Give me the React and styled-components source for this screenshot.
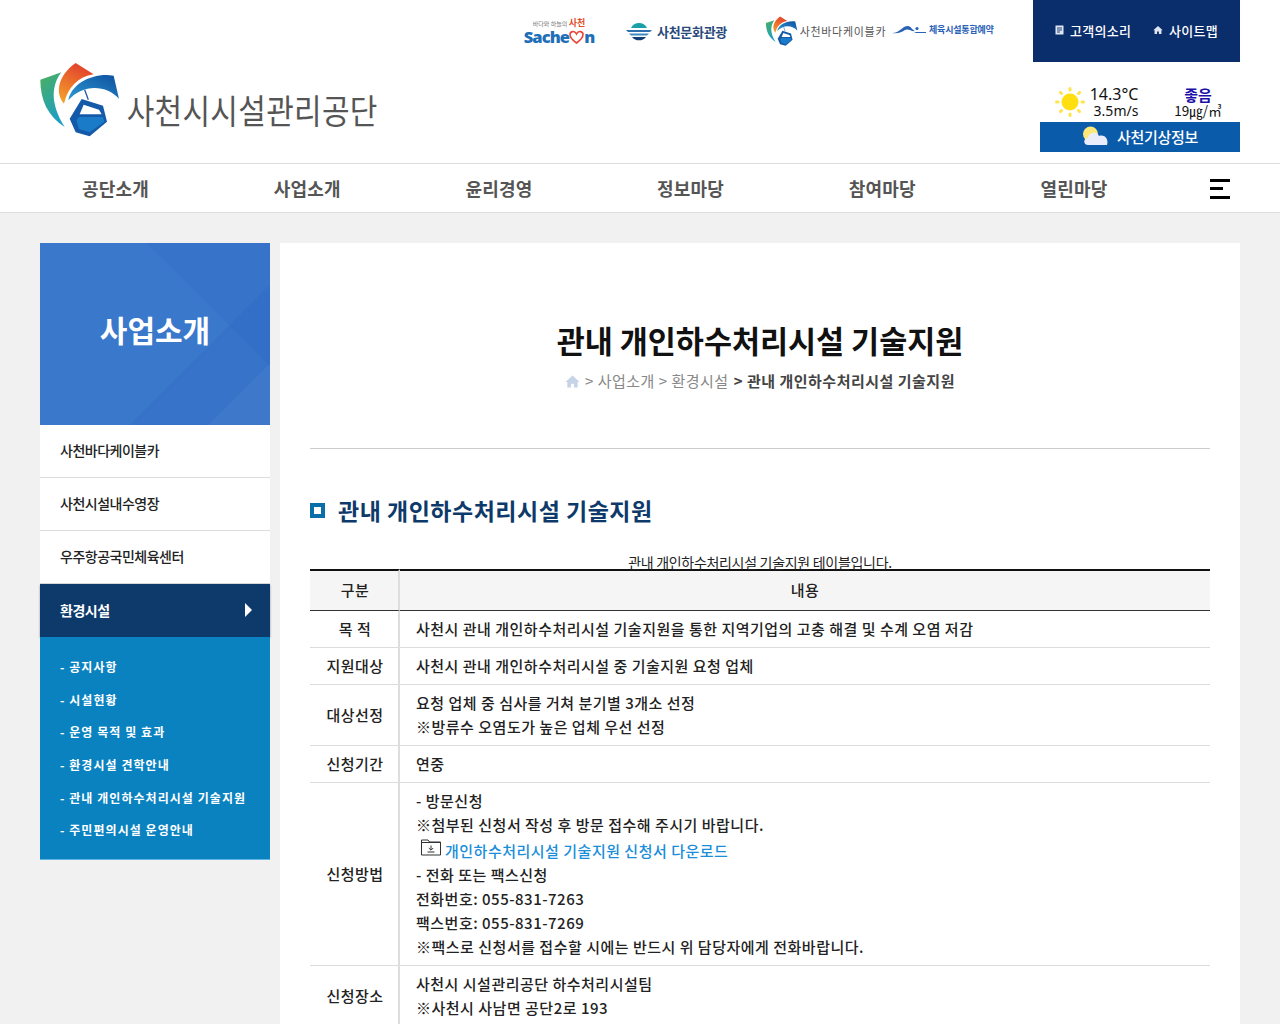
import React from "react";
import styled, { createGlobalStyle } from "styled-components";

const GlobalStyle = createGlobalStyle`
  html, body {
    margin: 0;
    height: 100%;
    overflow: hidden;
    background: #f1f1f1;
    font-family: "Noto Sans CJK KR", "Noto Sans", sans-serif;
    color: #222;
  }
  * { box-sizing: border-box; }
  a { color: inherit; text-decoration: none; }
  ul { list-style: none; margin: 0; padding: 0; }
`;

const MainLogo = ({ size = 75 }) => (
  <svg width={(size * 245) / 225} height={size} viewBox="55 35 245 225">
    <defs>
      <linearGradient id="lgGreen" x1="0" y1="0" x2="0.4" y2="1">
        <stop offset="0" stopColor="#4cb05c" />
        <stop offset="1" stopColor="#1c9fc4" />
      </linearGradient>
      <linearGradient id="lgRed" x1="0.6" y1="0" x2="0.2" y2="1">
        <stop offset="0" stopColor="#e2402c" />
        <stop offset="1" stopColor="#f4a12c" />
      </linearGradient>
      <linearGradient id="lgBlue" x1="0" y1="1" x2="1" y2="0">
        <stop offset="0" stopColor="#2a9ad4" />
        <stop offset="1" stopColor="#0f4f9e" />
      </linearGradient>
    </defs>
    <path d="M62 88 L125 66 C98 102 88 155 135 230 C85 198 62 150 62 88Z" fill="url(#lgGreen)" />
    <path d="M168 38 L222 72 C175 80 145 110 133 160 C105 128 115 75 168 38Z" fill="url(#lgRed)" />
    <path d="M146 150 C155 100 220 66 282 76 L298 145 C262 104 190 98 146 150Z" fill="url(#lgBlue)" />
    <path d="M195 118 L206 148" stroke="#1d5ea8" strokeWidth="4" fill="none" />
    <path d="M186 146 L250 166 L262 214 L210 258 L168 246 L150 205Z" fill="#155aa8" />
    <path d="M192 163 L238 178 L246 192 L180 192Z" fill="#fff" />
    <path d="M178 200 L250 200 L254 214 L210 246 L178 236 L170 210Z" fill="#1a7cc8" />
  </svg>
);

const Sun = () => (
  <svg width="32" height="32" viewBox="0 0 32 32">
    <circle cx="16" cy="16" r="8.5" fill="#ffdf10" />
    {[0, 45, 90, 135, 180, 225, 270, 315].map((a) => (
      <rect key={a} x="14.5" y="1" width="3" height="4.5" rx="1.5" fill="#ffe34a" transform={`rotate(${a} 16 16)`} />
    ))}
  </svg>
);

const CloudSun = () => (
  <svg width="27" height="20" viewBox="0 0 27 20">
    <circle cx="8.5" cy="8" r="7.5" fill="#ffe87a" />
    <path d="M6 19 C1 19 1 12 6 12 C7 6 15 5 17 10 C23 8 27 14 25 19Z" fill="#e9edfb" />
  </svg>
);

const Hamburger = () => (
  <MenuButton width="20" height="20" viewBox="0 0 20 20">
    <rect x="0" y="0" width="20" height="3" fill="#000" />
    <rect x="0" y="8" width="13" height="3" fill="#000" />
    <rect x="0" y="17" width="20" height="3" fill="#000" />
  </MenuButton>
);

const FolderIcon = () => (
  <svg width="20" height="17" viewBox="0 0 20 17" fill="none" stroke="#333" strokeWidth="1">
    <path d="M0.5 16 V1 H7 L8.5 3 H19.5 V16Z" fill="#fff" />
    <path d="M0.5 3.5 H19.5" />
    <path d="M10 6.5 V11 M7.8 9 L10 11.2 L12.2 9 M6.5 13 H13.5" />
  </svg>
);

const HomeIcon = ({ color, size = 15 }) => (
  <svg width={size} height={size} viewBox="0 0 16 16">
    <path d="M8 1.5 L15.5 8.5 H13.5 V14.5 H9.5 V10.5 H6.5 V14.5 H2.5 V8.5 H0.5Z" fill={color} />
  </svg>
);

const NoteIcon = () => (
  <svg width="9" height="10" viewBox="0 0 9 10">
    <rect x="0.5" y="0.5" width="8" height="9" fill="#dfe6f2" />
    <path d="M2 3 H7 M2 5 H7 M2 7 H5" stroke="#0a2d6b" strokeWidth="0.9" />
  </svg>
);

export default function App() {
  const menus = ["공단소개", "사업소개", "윤리경영", "정보마당", "참여마당", "열린마당"];
  const side = ["사천바다케이블카", "사천시설내수영장", "우주항공국민체육센터"];
  const subs = ["공지사항", "시설현황", "운영 목적 및 효과", "환경시설 견학안내", "관내 개인하수처리시설 기술지원", "주민편의시설 운영안내"];

  return (
    <>
      <GlobalStyle />
      <Header>
        <TopRow>
          <SachenLogo>
            <SachenSmall>
              바다와 하늘의 <b>사천</b>
            </SachenSmall>
            <SachenWord>
              Sache
              <svg width="15" height="14" viewBox="0 0 15 14">
                <path d="M7.5 13 C2 9 1 6.5 1 4.5 C1 1.5 5.5 0 7.5 4 C9.5 0 14 1.5 14 4.5 C14 6.5 13 9 7.5 13Z" fill="none" stroke="#e8463a" strokeWidth="1.6" />
              </svg>
              n
            </SachenWord>
          </SachenLogo>
          <CultureLogo>
            <svg width="26" height="22" viewBox="0 0 26 22">
              <path d="M5 8 A9 9 0 0 1 21 8Z" fill="#1aa0a8" />
              <path d="M0 10 H26 L24 12 H2Z" fill="#2f6fb0" />
              <path d="M3 13.5 H23 L21 15.5 H5Z" fill="#3c8ac4" />
              <path d="M6 17 H20 A9 9 0 0 1 6 17Z" fill="#123f7a" />
            </svg>
            사천문화관광
          </CultureLogo>
          <CableLogo>
            <MainLogo size={30} />
            <span>사천바다케이블카</span>
          </CableLogo>
          <SportsLogo>
            <svg width="34" height="10" viewBox="0 0 34 10">
              <path d="M0 9 C8 9 10 2 16 2 C19 2 20 6 23 7 C20 8 16 4 13 6 C10 8 6 10 0 9Z M22 8 H34 V9 H24Z" fill="#2a62b8" />
              <circle cx="25" cy="4.5" r="1.6" fill="#2a62b8" />
            </svg>
            <span>체육시설통합예약</span>
          </SportsLogo>
          <UtilBox>
            <UtilLink>
              <NoteIcon />
              고객의소리
            </UtilLink>
            <UtilLink>
              <HomeIcon color="#dfe6f2" size={10} />
              사이트맵
            </UtilLink>
          </UtilBox>
        </TopRow>
        <BrandRow>
          <Brand>
            <MainLogo />
            <BrandName>사천시시설관리공단</BrandName>
          </Brand>
          <Weather>
            <WeatherInfo>
              <Sun />
              <Temp>
                <strong>14.3°C</strong>
                <span>3.5m/s</span>
              </Temp>
              <Dust>
                <strong>좋음</strong>
                <span>19㎍/㎥</span>
              </Dust>
            </WeatherInfo>
            <WeatherLink>
              <CloudSun />
              사천기상정보
            </WeatherLink>
          </Weather>
        </BrandRow>
      </Header>

      <Nav>
        <NavList>
          {menus.map((m) => (
            <NavItem key={m}>{m}</NavItem>
          ))}
        </NavList>
        <Hamburger />
      </Nav>

      <Page>
        <Sidebar>
          <SideTitle>사업소개</SideTitle>
          <ul>
            {side.map((s) => (
              <SideItem key={s}>{s}</SideItem>
            ))}
            <ActiveItem>
              환경시설
              <Arrow />
            </ActiveItem>
          </ul>
          <SubList>
            {subs.map((s) => (
              <SubItem key={s}>- {s}</SubItem>
            ))}
          </SubList>
        </Sidebar>

        <Content>
          <PageTitle>관내 개인하수처리시설 기술지원</PageTitle>
          <Crumbs>
            <HomeIcon color="#c5d4e6" />
            <span>&gt; 사업소개 &gt; 환경시설</span>
            <b>&gt; 관내 개인하수처리시설 기술지원</b>
          </Crumbs>
          <Rule />
          <SectionTitle>관내 개인하수처리시설 기술지원</SectionTitle>
          <InfoTable>
            <caption>관내 개인하수처리시설 기술지원 테이블입니다.</caption>
            <thead>
              <tr>
                <HeadCell $first>구분</HeadCell>
                <HeadCell>내용</HeadCell>
              </tr>
            </thead>
            <tbody>
              <tr>
                <RowHead>목 적</RowHead>
                <Cell>사천시 관내 개인하수처리시설 기술지원을 통한 지역기업의 고충 해결 및 수계 오염 저감</Cell>
              </tr>
              <tr>
                <RowHead>지원대상</RowHead>
                <Cell>사천시 관내 개인하수처리시설 중 기술지원 요청 업체</Cell>
              </tr>
              <tr>
                <RowHead>대상선정</RowHead>
                <Cell>
                  요청 업체 중 심사를 거쳐 분기별 3개소 선정
                  <br />
                  ※방류수 오염도가 높은 업체 우선 선정
                </Cell>
              </tr>
              <tr>
                <RowHead>신청기간</RowHead>
                <Cell>연중</Cell>
              </tr>
              <tr>
                <RowHead>신청방법</RowHead>
                <Cell>
                  - 방문신청
                  <br />
                  ※첨부된 신청서 작성 후 방문 접수해 주시기 바랍니다.
                  <br />
                  <DownloadLink href="#">
                    <FolderIcon />
                    개인하수처리시설 기술지원 신청서 다운로드
                  </DownloadLink>
                  <br />
                  - 전화 또는 팩스신청
                  <br />
                  전화번호: 055-831-7263
                  <br />
                  팩스번호: 055-831-7269
                  <br />
                  ※팩스로 신청서를 접수할 시에는 반드시 위 담당자에게 전화바랍니다.
                </Cell>
              </tr>
              <tr>
                <RowHead>신청장소</RowHead>
                <Cell>
                  사천시 시설관리공단 하수처리시설팀
                  <br />
                  ※사천시 사남면 공단2로 193
                </Cell>
              </tr>
            </tbody>
          </InfoTable>
        </Content>
      </Page>
    </>
  );
}

const Header = styled.header`
  background: #fff;
  padding: 0 40px;
  height: 163px;
`;

const TopRow = styled.div`
  display: flex;
  justify-content: flex-end;
  align-items: center;
  height: 62px;
`;

const SachenLogo = styled.a`
  display: flex;
  flex-direction: column;
  align-items: center;
  width: 70px;
  margin-top: 1px;
`;

const SachenSmall = styled.span`
  font-size: 6px;
  line-height: 9px;
  color: #777;
  white-space: nowrap;

  b {
    font-size: 9px;
    color: #e2502c;
  }
`;

const SachenWord = styled.span`
  display: flex;
  align-items: center;
  font-family: "Open Sans", sans-serif;
  font-weight: 800;
  font-size: 16.5px;
  line-height: 17px;
  letter-spacing: -0.9px;
  color: #1f6fb8;
`;

const CultureLogo = styled.a`
  display: flex;
  align-items: center;
  gap: 5px;
  width: 102px;
  margin-left: 32px;
  font-size: 13px;
  font-weight: 700;
  letter-spacing: -0.3px;
  color: #2a4a7c;
  white-space: nowrap;
`;

const CableLogo = styled.a`
  display: flex;
  align-items: center;
  gap: 2px;
  width: 123px;
  margin-left: 37px;
  font-size: 11px;
  letter-spacing: 0.7px;
  color: #555;
  white-space: nowrap;
`;

const SportsLogo = styled.a`
  display: flex;
  align-items: center;
  gap: 3px;
  width: 103px;
  margin-left: 4px;
  margin-top: -4px;
  font-size: 9px;
  font-weight: 700;
  letter-spacing: -0.2px;
  color: #2a62b8;
  white-space: nowrap;
`;

const UtilBox = styled.div`
  display: flex;
  align-items: center;
  justify-content: center;
  gap: 22px;
  width: 207px;
  height: 62px;
  padding-bottom: 2px;
  margin-left: 38px;
  background: #0a2d6b;
`;

const UtilLink = styled.a`
  display: flex;
  align-items: center;
  gap: 6px;
  font-size: 13px;
  font-weight: 500;
  letter-spacing: 0.25px;
  color: #fff;
`;

const BrandRow = styled.div`
  display: flex;
  justify-content: space-between;
  height: 101px;
`;

const Brand = styled.a`
  display: flex;
  align-items: flex-start;
  gap: 7px;
  margin-left: -2px;
`;

const BrandName = styled.span`
  margin-top: 25px;
  font-size: 30px;
  line-height: 44px;
  font-weight: 400;
  letter-spacing: 0.3px;
  color: #555;
  white-space: nowrap;
  transform: scaleY(1.15);
`;

const Weather = styled.div`
  width: 200px;
  margin-top: 20px;
`;

const WeatherInfo = styled.div`
  display: flex;
  align-items: center;
  height: 40px;
  padding: 0 0 1px 14px;
`;

const Temp = styled.div`
  display: flex;
  flex-direction: column;
  align-items: center;
  width: 52px;
  margin-left: 2px;
  color: #111;

  strong {
    font-family: "Noto Sans", sans-serif;
    font-size: 16px;
    line-height: 17px;
    font-weight: 400;
  }

  span {
    font-family: "Noto Sans", sans-serif;
    font-size: 14px;
    line-height: 15px;
    padding-left: 4px;
  }
`;

const Dust = styled.div`
  display: flex;
  flex-direction: column;
  align-items: center;
  width: 60px;
  margin-left: 28px;
  color: #111;

  strong {
    font-size: 15px;
    line-height: 17px;
    font-weight: 700;
    color: #1a0fa8;
  }

  span {
    font-size: 13.5px;
    line-height: 15px;
    white-space: nowrap;
  }
`;

const WeatherLink = styled.a`
  display: flex;
  align-items: center;
  justify-content: center;
  gap: 8px;
  height: 30px;
  padding-bottom: 2px;
  background: #0b5bab;
  color: #fff;
  font-size: 15px;
  font-weight: 500;
  letter-spacing: -0.3px;
`;

const Nav = styled.nav`
  display: flex;
  align-items: center;
  justify-content: space-between;
  height: 50px;
  padding: 0 50px 0 82px;
  background: #fff;
  border-top: 1px solid #ddd;
  border-bottom: 1px solid #ddd;
`;

const NavList = styled.ul`
  flex: 1;
  display: grid;
  grid-template-columns: repeat(5, 191.7px) 1fr;
`;

const NavItem = styled.li`
  font-size: 18px;
  font-weight: 700;
  letter-spacing: 0.2px;
  color: #555;
`;

const MenuButton = styled.svg`
  margin-top: 2px;
`;

const Page = styled.main`
  display: flex;
  align-items: flex-start;
  gap: 10px;
  padding: 30px 40px 0;
`;

const Sidebar = styled.aside`
  flex: 0 0 230px;
`;

const SideTitle = styled.h2`
  display: flex;
  align-items: center;
  justify-content: center;
  height: 182px;
  margin: 0;
  padding-bottom: 10px;
  font-size: 30px;
  font-weight: 700;
  color: #fff;
  background:
    linear-gradient(135deg, transparent 85%, rgba(255, 255, 255, 0.04) 85%),
    linear-gradient(45deg, transparent 70%, rgba(0, 50, 170, 0.06) 70%),
    linear-gradient(135deg, transparent 66%, rgba(0, 50, 170, 0.07) 66%),
    #3a78cb;
`;

const SideItem = styled.li`
  display: flex;
  align-items: center;
  height: 53px;
  padding: 0 0 2px 20px;
  background: #fff;
  border-bottom: 1px solid #ddd;
  font-size: 14px;
  font-weight: 500;
  letter-spacing: -0.5px;
  color: #222;
`;

const ActiveItem = styled.li`
  display: flex;
  align-items: center;
  justify-content: space-between;
  height: 53px;
  padding: 0 18px 2px 20px;
  background: #0e3a6b;
  box-shadow: 0 1px 2px rgba(0, 30, 70, 0.4);
  font-size: 14px;
  font-weight: 700;
  letter-spacing: -0.5px;
  color: #fff;
`;

const Arrow = styled.i`
  width: 0;
  height: 0;
  border-left: 7px solid #fff;
  border-top: 7px solid transparent;
  border-bottom: 7px solid transparent;
`;

const SubList = styled.ul`
  display: flex;
  flex-direction: column;
  gap: 14.7px;
  height: 223px;
  padding: 21px 0 0 20px;
  background: #0a82bf;
  border-bottom: 1px solid #5fb5e4;
`;

const SubItem = styled.li`
  font-size: 12px;
  line-height: 18px;
  font-weight: 700;
  letter-spacing: 1.05px;
  color: #fff;
  white-space: nowrap;
`;

const Content = styled.section`
  flex: 1;
  min-width: 0;
  padding: 0 30px 40px;
  background: #fff;
`;

const PageTitle = styled.h1`
  margin: 0;
  padding-top: 74px;
  font-size: 30.5px;
  line-height: 46px;
  font-weight: 700;
  color: #111;
  text-align: center;
`;

const Crumbs = styled.div`
  display: flex;
  align-items: center;
  justify-content: center;
  gap: 5px;
  margin-top: 6px;
  font-size: 15px;
  line-height: 24px;
  letter-spacing: 0.5px;
  color: #888;

  b {
    font-weight: 700;
    color: #444;
  }
`;

const Rule = styled.hr`
  height: 1px;
  margin: 55px 0 0;
  border: 0;
  background: #ccc;
`;

const SectionTitle = styled.h3`
  position: relative;
  margin: 42px 0 0;
  padding-left: 28px;
  font-size: 23px;
  line-height: 38px;
  font-weight: 700;
  letter-spacing: 0.5px;
  color: #0e3a6b;

  &::before {
    content: "";
    position: absolute;
    box-sizing: border-box;
    left: 0;
    top: 12px;
    width: 15px;
    height: 15px;
    border: 4px solid #0a6fa8;
    background: #fff;
  }
`;

const InfoTable = styled.table`
  width: 100%;
  margin-top: 26px;
  border-collapse: separate;
  border-spacing: 0;
  font-size: 15px;
  line-height: 24px;
  letter-spacing: 0.5px;
  color: #222;

  caption {
    height: 14px;
    font-size: 14px;
    line-height: 15px;
    letter-spacing: -0.3px;
    white-space: nowrap;
  }
`;

const HeadCell = styled.th`
  height: 42px;
  padding: 0 0 2px ${(p) => (p.$first ? "2px" : "0")};
  width: ${(p) => (p.$first ? "90px" : "auto")};
  background: #f5f5f5;
  border-top: 2px solid #111;
  border-bottom: 1px solid #333;
  border-right: ${(p) => (p.$first ? "2px solid #ddd" : "0")};
  font-weight: 500;
  text-align: center;
`;

const RowHead = styled.th`
  padding: 6px 0 6px 2px;
  background: #fff;
  border-bottom: 1px solid #ddd;
  border-right: 2px solid #ddd;
  font-weight: 500;
  text-align: center;
`;

const Cell = styled.td`
  padding: 6px 16px;
  border-bottom: 1px solid #ddd;
  font-weight: 500;
`;

const DownloadLink = styled.a`
  display: inline-flex;
  align-items: center;
  gap: 4px;
  height: 26px;
  padding-top: 2px;
  margin-left: 5px;
  color: #1a8ed8;
  vertical-align: top;

  svg {
    margin-top: -8px;
  }
`;
